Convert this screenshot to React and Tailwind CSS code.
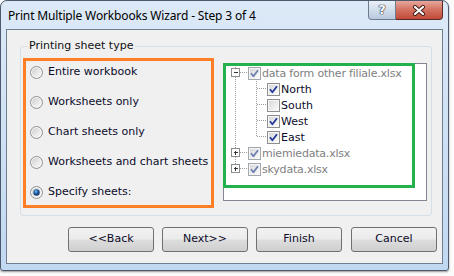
import React from 'react';

const font = { fontFamily: '"DejaVu Sans", sans-serif' };

function Radio({ checked }) {
  return (
    <svg width="13" height="13" viewBox="0 0 13 13" className="shrink-0">
      <defs>
        <linearGradient id="rg" x1="0" y1="0" x2="1" y2="1">
          <stop offset="0" stopColor="#cfcfcf" />
          <stop offset="1" stopColor="#fbfbfb" />
        </linearGradient>
        <radialGradient id="rd" cx="0.4" cy="0.35" r="0.7">
          <stop offset="0" stopColor="#7fb6ea" />
          <stop offset="0.5" stopColor="#1c5aa0" />
          <stop offset="1" stopColor="#0c2c58" />
        </radialGradient>
      </defs>
      <circle cx="6.5" cy="6.5" r="6" fill="#f4f4f4" stroke="#8e8f8f" />
      <circle cx="6.5" cy="6.5" r="4.5" fill="url(#rg)" />
      {checked && <circle cx="6.5" cy="6.5" r="3.2" fill="url(#rd)" />}
    </svg>
  );
}

function Check({ checked, dim }) {
  const border = dim ? '#a3a8ae' : '#8e8f8f';
  const mark = dim ? '#6a7fb2' : '#24389a';
  return (
    <svg width="13" height="13" viewBox="0 0 13 13" className="shrink-0">
      <defs>
        <linearGradient id="cg" x1="0" y1="0" x2="1" y2="1">
          <stop offset="0" stopColor="#d8d8d8" />
          <stop offset="1" stopColor="#fbfbfb" />
        </linearGradient>
      </defs>
      <rect x="0.5" y="0.5" width="12" height="12" fill="#f6f6f6" stroke={border} />
      <rect x="2" y="2" width="9" height="9" fill="url(#cg)" />
      {checked && (
        <path d="M3 6.3 L5.4 9.2 L10 3.2" fill="none" stroke={mark} strokeWidth="1.8" strokeLinejoin="round" />
      )}
    </svg>
  );
}

const dot = { stroke: '#9a9a9a', strokeDasharray: '1 1', shapeRendering: 'crispEdges' };

function Expander({ open }) {
  return (
    <g>
      <rect x="7.5" y="3.5" width="8" height="8" fill="#fff" stroke="#8d8d8d" shapeRendering="crispEdges" />
      <path d="M9.5 7.5 H13.5" stroke="#333" shapeRendering="crispEdges" />
      {!open && <path d="M11.5 5.5 V9.5" stroke="#333" shapeRendering="crispEdges" />}
    </g>
  );
}

function FileRow({ name, open, last }) {
  return (
    <div className="flex items-center h-[16px]">
      <svg width="24" height="16" className="shrink-0">
        <path d="M11.5 0 V3.5" style={dot} />
        {!last && <path d="M11.5 11.5 V16" style={dot} />}
        <path d="M16 7.5 H24" style={dot} />
        <Expander open={open} />
      </svg>
      <Check checked dim />
      <span className="ml-[1px] text-[11px] tracking-[-0.2px] text-[#808080] leading-none">{name}</span>
    </div>
  );
}

function SheetRow({ name, checked, last }) {
  return (
    <div className="flex items-center h-[16px]">
      <svg width="43" height="16" className="shrink-0">
        <path d="M11.5 0 V16" style={dot} />
        <path d={last ? 'M32.5 0 V8' : 'M32.5 0 V16'} style={dot} />
        <path d="M33 7.5 H43" style={dot} />
      </svg>
      <Check checked={checked} />
      <span className="ml-[1px] text-[11px] text-[#0b0b2a] leading-none">{name}</span>
    </div>
  );
}

const options = ['Entire workbook', 'Worksheets only', 'Chart sheets only', 'Worksheets and chart sheets', 'Specify sheets:'];

export default function App() {
  return (
    <div className="w-[454px] h-[276px] bg-[#fbfbfb] overflow-hidden" style={font}>
      <div className="w-[449px] h-[271px] rounded-t-[7px] rounded-b-[3px] border border-[#4a5a6c] bg-gradient-to-b from-[#dce9f7] to-[#c2d8f1] flex flex-col px-[5px] pb-[6px] shadow-[0_1px_2px_rgba(0,0,0,0.4)]">
        <div className="h-[28px] flex items-start justify-between">
          <span className="pl-[2px] pt-[8px] text-[12px] leading-[14px] tracking-[-0.15px] text-black" style={{ fontFamily: '"Noto Sans", sans-serif' }}>
            Print Multiple Workbooks Wizard - Step 3 of 4
          </span>
          <div className="flex">
            <div className="w-[28px] h-[19px] rounded-bl-[4px] border border-[#6d7c8d] border-t-0 bg-gradient-to-b from-[#e9f0f8] via-[#d2ddeb] to-[#b9c8dc] flex items-center justify-center text-white text-[13px] font-bold [text-shadow:0_0_1px_#223,0_0_1px_#223,0_0_1px_#223]">
              ?
            </div>
            <div className="w-[47px] h-[19px] rounded-br-[4px] border border-l-0 border-t-0 border-[#5a2a26] bg-gradient-to-b from-[#e7a69c] via-[#d3705f] to-[#c04a38] flex items-center justify-center">
              <svg width="14" height="11" viewBox="0 0 14 11">
                <path d="M3 2 L11 9 M11 2 L3 9" stroke="#3a1a16" strokeWidth="4" strokeLinecap="round" />
                <path d="M3 2 L11 9 M11 2 L3 9" stroke="#fff" strokeWidth="2.2" strokeLinecap="round" />
              </svg>
            </div>
          </div>
        </div>
        <div className="flex-1 border border-[#6e7f91] bg-[#f0f0f0] flex flex-col">
          <div className="relative ml-[13px] mt-[16px] w-[412px] h-[170px] rounded-[3px] border border-[#d5dfe5] flex items-start">
            <span className="absolute left-[6px] -top-[8px] px-[2px] bg-[#f0f0f0] text-[11px] leading-[14px] text-[#111]">
              Printing sheet type
            </span>
            <div className="ml-[2px] mt-[11px] w-[191px] h-[150px] border-[3px] border-[#ff7f27] flex flex-col gap-[15px] pt-[4px] pl-[4px]">
              {options.map((o, i) => (
                <label key={o} className="flex items-center gap-[5px] h-[15px] text-[11px] text-[#0b0b2a] whitespace-nowrap">
                  <Radio checked={i === 4} />
                  {o}
                </label>
              ))}
            </div>
            <div className="relative ml-[9px] mt-[16px] w-[204px] h-[138px] border border-[#828790] bg-white pt-[1px]">
              <FileRow name="data form other filiale.xlsx" open />
              <SheetRow name="North" checked />
              <SheetRow name="South" />
              <SheetRow name="West" checked />
              <SheetRow name="East" checked last />
              <FileRow name="miemiedata.xlsx" />
              <FileRow name="skydata.xlsx" last />
              <div className="absolute -left-px -top-px w-[192px] h-[125px] border-[3px] border-[#22b14c]" />
            </div>
          </div>
          <div className="flex mt-[11px] ml-[61px] gap-[8px]">
            {['<<Back', 'Next>>', 'Finish', 'Cancel'].map((b, i) => (
              <button
                key={b}
                className={`w-[86px] h-[25px] rounded-[3px] border border-[#707070] bg-[linear-gradient(#f2f2f2_0%,#ebebeb_48%,#dddddd_52%,#cfcfcf_100%)] text-[11px] text-[#0b0b2a] ${i === 3 ? 'ml-[1px]' : ''}`}
              >
                {b}
              </button>
            ))}
          </div>
        </div>
      </div>
    </div>
  );
}
